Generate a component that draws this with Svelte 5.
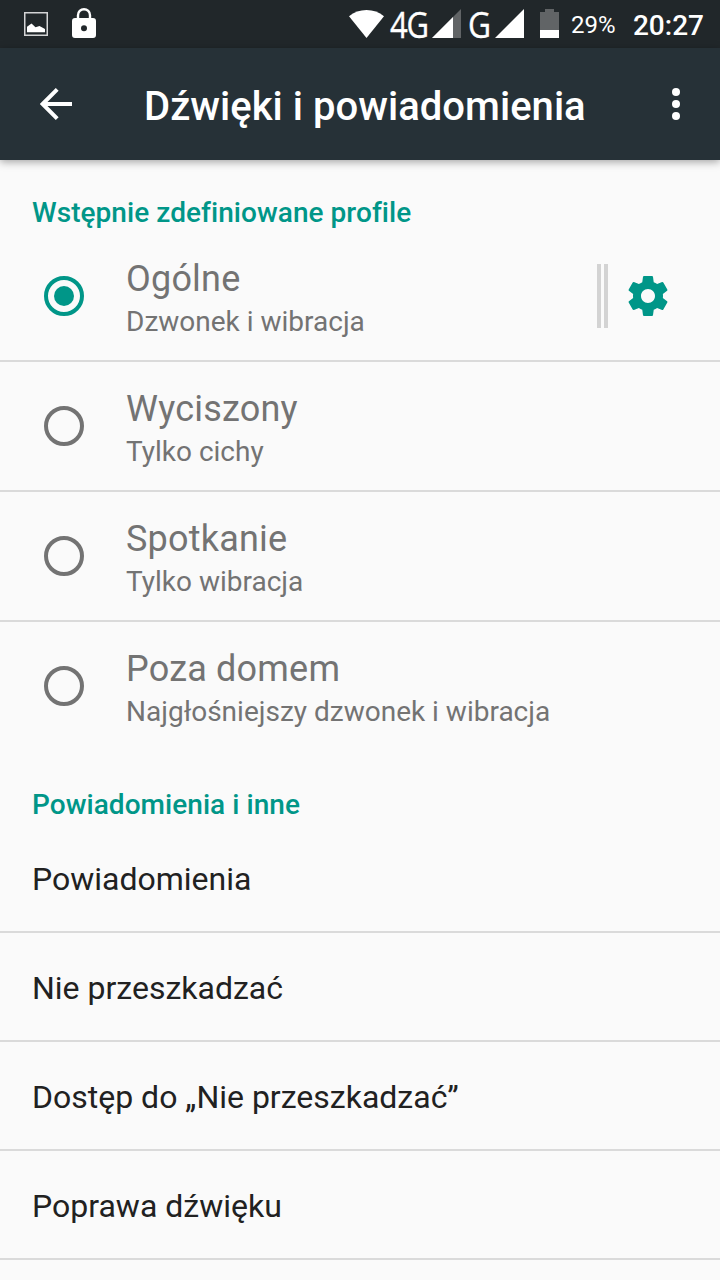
<script>
  const profiles = [
    { name: 'Ogólne', detail: 'Dzwonek i wibracja' },
    { name: 'Wyciszony', detail: 'Tylko cichy' },
    { name: 'Spotkanie', detail: 'Tylko wibracja' },
    { name: 'Poza domem', detail: 'Najgłośniejszy dzwonek i wibracja' }
  ];
  const items = ['Powiadomienia', 'Nie przeszkadzać', 'Dostęp do „Nie przeszkadzać”', 'Poprawa dźwięku'];
  let selected = $state(0);
</script>

<div class="screen">
  <div class="status">
    <svg class="picture" width="24" height="24" viewBox="0 0 24 24">
      <rect x=".75" y=".75" width="22.5" height="22.5" fill="none" stroke="#d3d4d5" stroke-width="1.5" />
      <path d="M3 20.3v-5.5l4.5-3.3 4 3.8 4-1.2 5.5 3v3.2z" fill="#fff" />
    </svg>
    <svg class="lock" width="24" height="30" viewBox="0 0 24 30">
      <path d="M6 11V7.2a6 6 0 0 1 12 0V11" fill="none" stroke="#fff" stroke-width="2.4" />
      <path fill-rule="evenodd" d="M3 10h18q3 0 3 3v14q0 3-3 3H3q-3 0-3-3V13q0-3 3-3zm9 7.2a3 3 0 1 0 0 6 3 3 0 0 0 0-6z" fill="#fff" />
    </svg>
    <svg class="wifi" width="35" height="28" viewBox="0 0 35 28">
      <path d="M17.5 28 0 6.3Q7.5 0 17.5 0T35 6.3z" fill="#fff" />
    </svg>
    <span class="net4g">4G</span>
    <svg class="signal1" width="29" height="29" viewBox="0 0 29 29">
      <path d="M0 29 29 0v29z" fill="#616466" />
      <path d="M0 29 21 8v21z" fill="#fff" />
    </svg>
    <span class="netg">G</span>
    <svg class="signal2" width="29" height="29" viewBox="0 0 29 29">
      <path d="M0 29 29 0v29z" fill="#fff" />
    </svg>
    <svg class="battery" width="19" height="29" viewBox="0 0 19 29">
      <path d="M0 3h5V0h9v3h5v18H0z" fill="#616466" />
      <path d="M0 21h19v8H0z" fill="#fff" />
    </svg>
    <span class="percent">29%</span>
    <span class="clock">20:27</span>
  </div>

  <header>
    <svg class="back" width="32" height="32" viewBox="0 0 32 32">
      <path d="M32 16H3M17.2 1.4 2.6 16l14.6 14.6" fill="none" stroke="#fff" stroke-width="4" />
    </svg>
    <h1>Dźwięki i powiadomienia</h1>
    <svg class="more" width="8" height="32" viewBox="0 0 8 32" fill="#fff">
      <circle cx="4" cy="4" r="4" /><circle cx="4" cy="16" r="4" /><circle cx="4" cy="28" r="4" />
    </svg>
  </header>

  <main>
    <h2>Wstępnie zdefiniowane profile</h2>
    {#each profiles as profile, i}
      <label class="profile">
        <input type="radio" name="profile" value={i} bind:group={selected} />
        <svg class="radio" class:on={selected === i} width="40" height="40" viewBox="0 0 40 40">
          <circle cx="20" cy="20" r="18" fill="none" stroke="currentColor" stroke-width="4" />
          {#if selected === i}<circle cx="20" cy="20" r="10" fill="currentColor" />{/if}
        </svg>
        <span class="copy">
          <span class="name">{profile.name}</span>
          <span class="detail">{profile.detail}</span>
        </span>
        {#if selected === i}
          <span class="bars"></span>
          <svg class="gear" width="48" height="48" viewBox="0 0 24 24">
            <path fill="#009688" d="M19.43 12.98c.04-.32.07-.64.07-.98s-.03-.66-.07-.98l2.11-1.65c.19-.15.24-.42.12-.64l-2-3.46c-.12-.22-.39-.3-.61-.22l-2.49 1c-.52-.4-1.08-.73-1.69-.98l-.38-2.65C14.46 2.18 14.25 2 14 2h-4c-.25 0-.46.18-.49.42l-.38 2.65c-.61.25-1.17.59-1.69.98l-2.49-1c-.23-.09-.49 0-.61.22l-2 3.46c-.13.22-.07.49.12.64l2.11 1.65c-.04.32-.07.65-.07.98s.03.66.07.98l-2.11 1.65c-.19.15-.24.42-.12.64l2 3.46c.12.22.39.3.61.22l2.49-1c.52.4 1.08.73 1.69.98l.38 2.65c.03.24.24.42.49.42h4c.25 0 .46-.18.49-.42l.38-2.65c.61-.25 1.17-.59 1.69-.98l2.49 1c.23.09.49 0 .61-.22l2-3.46c.12-.22.07-.49-.12-.64l-2.11-1.65zM12 15.5c-1.93 0-3.5-1.57-3.5-3.5s1.57-3.5 3.5-3.5 3.5 1.57 3.5 3.5-1.57 3.5-3.5 3.5z" />
          </svg>
        {/if}
      </label>
    {/each}
    <h2>Powiadomienia i inne</h2>
    {#each items as item}
      <div class="item">{item}</div>
    {/each}
  </main>
</div>

<style>
  :global(body) { margin: 0; overflow: hidden; }
  .screen {
    width: 720px;
    height: 1280px;
    overflow: hidden;
    background: #fafafa;
    font-family: Roboto, sans-serif;
    display: flex;
    flex-direction: column;
  }
  svg { display: block; flex: none; }
  .status {
    height: 48px;
    flex: none;
    background: #21272a;
    color: #fff;
    display: flex;
    align-items: flex-start;
  }
  .picture { margin: 12px 0 0 24px; }
  .lock { margin: 8px 0 0 24px; }
  .wifi { margin: 10px 0 0 252.5px; }
  .net4g, .netg {
    box-sizing: border-box;
    height: 48px;
    font: 36px/50px "Open Sans", sans-serif;
    -webkit-text-stroke: .4px #fff;
    transform-origin: 0 50%;
  }
  .net4g { width: 42px; margin-left: 6px; letter-spacing: -1.5px; transform: scaleX(.86); }
  .netg { width: 28px; margin-left: 6.5px; transform: scaleX(.88); }
  .signal1 { margin: 9px 0 0 .5px; }
  .signal2 { margin: 9px 0 0 -.5px; }
  .battery { margin: 9px 0 0 16px; }
  .percent { margin-left: 12px; font-size: 24px; line-height: 50px; }
  .clock { margin-left: auto; margin-right: 16px; font-size: 28px; font-weight: 500; line-height: 51px; }
  header {
    height: 112px;
    flex: none;
    box-sizing: border-box;
    padding: 0 40px;
    background: #263137;
    color: #fff;
    display: flex;
    align-items: center;
    box-shadow: 0 2px 8px rgba(0, 0, 0, .35);
    z-index: 1;
  }
  h1 { margin: 5px 0 0 72px; flex: 1; font-size: 40px; font-weight: 500; line-height: 49px; white-space: nowrap; letter-spacing: .03px; }
  h2 {
    margin: 0;
    height: 72px;
    box-sizing: border-box;
    padding: 36px 32px 0;
    color: #009688;
    font-size: 28px;
    font-weight: 500;
    line-height: 33px;
    letter-spacing: .05px;
  }
  .profile {
    height: 130px;
    box-sizing: border-box;
    border-bottom: 2px solid #dadada;
    padding: 0 48px 0 44px;
    display: flex;
    align-items: center;
    color: #737373;
  }
  .profile:nth-of-type(4) { border-color: transparent; }
  input { display: none; }
  .radio.on { color: #009688; }
  .copy { margin-left: 42px; flex: 1; display: flex; flex-direction: column; padding-top: 6px; }
  .name { font-size: 36px; line-height: 45px; letter-spacing: .2px; }
  .detail { font-size: 28px; line-height: 40px; }
  .bars {
    width: 3px;
    height: 64px;
    border: solid #d3d3d3;
    border-width: 0 4px;
    margin-right: 16px;
  }
  .item {
    height: 109px;
    box-sizing: border-box;
    border-bottom: 2px solid #dadada;
    padding: 2px 32px 0;
    font-size: 32px;
    line-height: 107px;
    color: #212121;
  }
</style>
